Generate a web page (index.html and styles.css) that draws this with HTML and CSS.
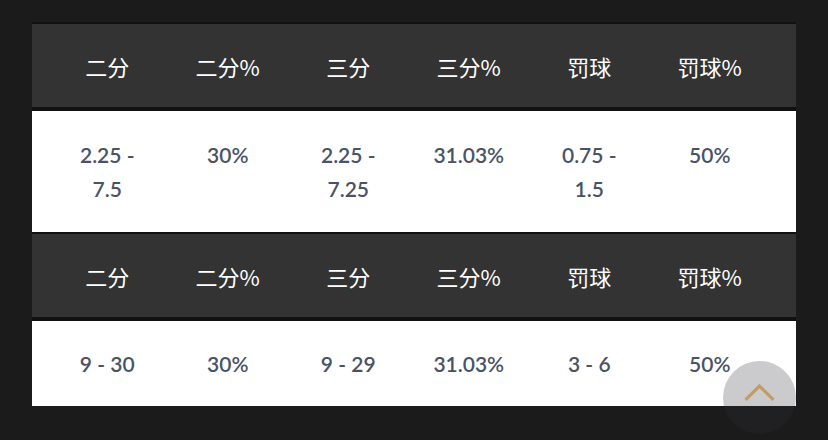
FILE: index.html
```html
<!DOCTYPE html>
<html lang="zh-CN">
<head>
<meta charset="utf-8">
<title>Stats</title>
<link rel="stylesheet" href="styles.css">
</head>
<body>
<div class="wrap">
  <div class="stats">
    <div class="row head">
      <div class="cell">二分</div><div class="cell">二分%</div><div class="cell">三分</div><div class="cell">三分%</div><div class="cell">罚球</div><div class="cell">罚球%</div>
    </div>
    <div class="row body body-tall">
      <div class="cell">2.25 - 7.5</div><div class="cell">30%</div><div class="cell">2.25 - 7.25</div><div class="cell">31.03%</div><div class="cell">0.75 - 1.5</div><div class="cell">50%</div>
    </div>
    <div class="row head">
      <div class="cell">二分</div><div class="cell">二分%</div><div class="cell">三分</div><div class="cell">三分%</div><div class="cell">罚球</div><div class="cell">罚球%</div>
    </div>
    <div class="row body">
      <div class="cell">9 - 30</div><div class="cell">30%</div><div class="cell">9 - 29</div><div class="cell">31.03%</div><div class="cell">3 - 6</div><div class="cell">50%</div>
    </div>
  </div>
</div>
<button class="to-top" aria-label="回到顶部">
  <svg width="31" height="17" viewBox="0 0 31 17"><path d="M1.5 15.8 L15.5 2 L29.5 15.8" fill="none" stroke="#c49b64" stroke-width="3.2"/></svg>
</button>
</body>
</html>
```
FILE: styles.css
```css
html, body {
  margin: 0;
  padding: 0;
  background: #1b1b1b;
  height: 100%;
  overflow: hidden;
}
.wrap {
  padding: 22px 32px 0 32px;
}
.stats {
  display: flex;
  flex-direction: column;
}
.row {
  display: grid;
  grid-template-columns: repeat(6, 1fr);
  padding: 0 26px 0 15px;
  text-align: center;
}
.cell {
  padding: 0 20px;
}
.head {
  background: #333333;
  border-top: 2px solid #111111;
  border-bottom: 4px solid #111111;
  height: 83px;
  align-items: center;
  color: #ffffff;
  font-family: "Noto Sans CJK SC", "Noto Sans", sans-serif;
  font-weight: 400;
  font-size: 22px;
  box-sizing: content-box;
}
.head .cell {
  padding: 0;
  white-space: nowrap;
}
.body {
  background: #ffffff;
  color: #4a5366;
  font-family: Lato, "Noto Sans", sans-serif;
  font-weight: 600;
  font-size: 21px;
  line-height: 34px;
  padding-top: 25.5px;
  padding-bottom: 25.5px;
  align-items: start;
}
.body-tall {
  padding-top: 26.5px;
  padding-bottom: 26.5px;
}
.to-top {
  position: absolute;
  left: 723px;
  top: 361px;
  width: 73px;
  height: 73px;
  border-radius: 50%;
  border: none;
  padding: 0;
  background: rgba(46, 48, 58, 0.25);
  display: flex;
  align-items: center;
  justify-content: center;
}
.to-top svg {
  margin-top: -11px;
}
```
